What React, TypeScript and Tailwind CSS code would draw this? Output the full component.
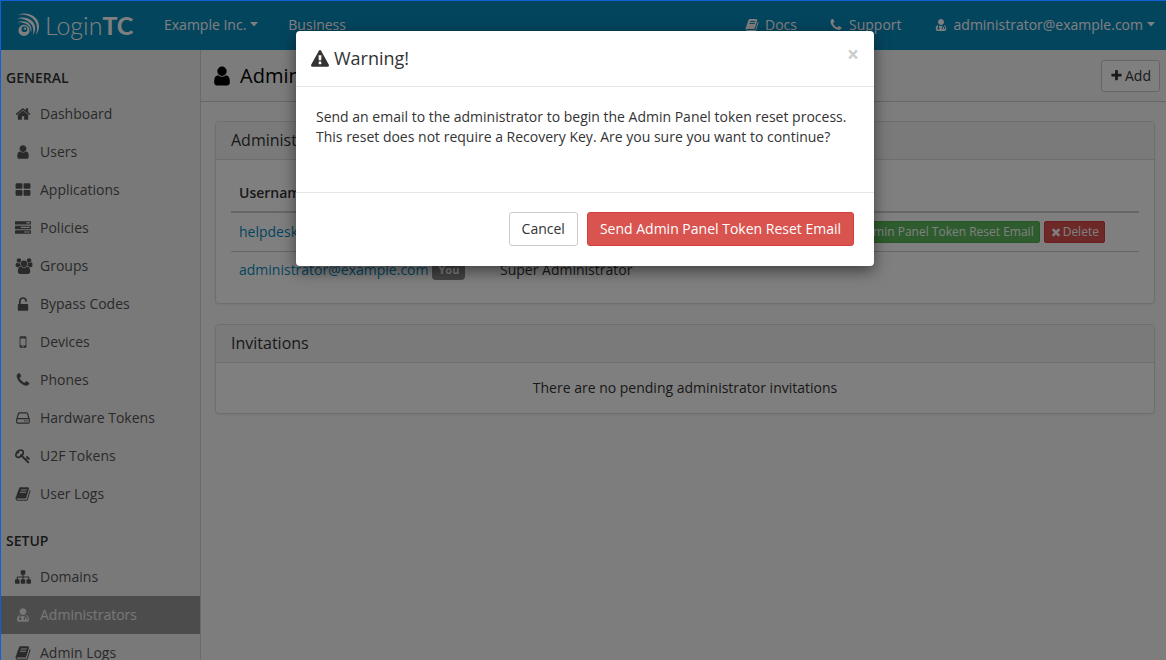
import type { ReactNode } from 'react';

const ICONS = {
  home: 'M1472 992v480q0 26-19 45t-45 19h-384v-384h-256v384h-384q-26 0-45-19t-19-45v-480q0-1 .5-3t.5-3l575-474 575 474q1 2 1 6zm223-69l-62 74q-8 9-21 11h-3q-13 0-21-7l-692-577-692 577q-12 8-24 7-13-2-21-11l-62-74q-8-10-7-23.5t11-21.5l719-599q32-26 76-26t76 26l244 204v-195q0-14 9-23t23-9h192q14 0 23 9t9 23v408l219 182q10 8 11 21.5t-7 23.5z',
  user: 'M1536 1399q0 109-62.5 187t-150.5 78h-854q-88 0-150.5-78t-62.5-187q0-85 8.5-160.5t31.5-152 58.5-131 94-89 134.5-34.5q131 128 313 128t313-128q76 0 134.5 34.5t94 89 58.5 131 31.5 152 8.5 160.5zm-256-887q0 159-112.5 271.5t-271.5 112.5-271.5-112.5-112.5-271.5 112.5-271.5 271.5-112.5 271.5 112.5 112.5 271.5z',
  thLarge: 'M832 1024v384q0 52-38 90t-90 38h-512q-52 0-90-38t-38-90v-384q0-52 38-90t90-38h512q52 0 90 38t38 90zm0-768v384q0 52-38 90t-90 38h-512q-52 0-90-38t-38-90v-384q0-52 38-90t90-38h512q52 0 90 38t38 90zm896 768v384q0 52-38 90t-90 38h-512q-52 0-90-38t-38-90v-384q0-52 38-90t90-38h512q52 0 90 38t38 90zm0-768v384q0 52-38 90t-90 38h-512q-52 0-90-38t-38-90v-384q0-52 38-90t90-38h512q52 0 90 38t38 90z',
  tasks: 'M1024 1408h640v-128h-640v128zm-384-512h1024v-128h-1024v128zm640-512h384v-128h-384v128zm512 832v256q0 26-19 45t-45 19h-1664q-26 0-45-19t-19-45v-256q0-26 19-45t45-19h1664q26 0 45 19t19 45zm0-512v256q0 26-19 45t-45 19h-1664q-26 0-45-19t-19-45v-256q0-26 19-45t45-19h1664q26 0 45 19t19 45zm0-512v256q0 26-19 45t-45 19h-1664q-26 0-45-19t-19-45v-256q0-26 19-45t45-19h1664q26 0 45 19t19 45z',
  users: 'M657 896q-162 5-265 128h-134q-82 0-138-40.5t-56-118.5q0-353 124-353 6 0 43.5 21t97.5 42.5 119 21.5q67 0 133-23-5 37-5 66 0 159 93 293zm1071 637q0 120-73 189.5t-194 69.5h-874q-121 0-194-69.5t-73-189.5q0-53 3.5-103.5t14-109 26.5-108.5 43-97.5 62-81 85.5-53.5 111.5-20q10 0 43 21.5t73 48 107 48 135 21.5 135-21.5 107-48 73-48 43-21.5q61 0 111.5 20t85.5 53.5 62 81 43 97.5 26.5 108.5 14 109 3.5 103.5zm-1024-1277q0 106-75 181t-181 75-181-75-75-181 75-181 181-75 181 75 75 181zm704 384q0 159-112.5 271.5t-271.5 112.5-271.5-112.5-112.5-271.5 112.5-271.5 271.5-112.5 271.5 112.5 112.5 271.5zm576 225q0 78-56 118.5t-138 40.5h-134q-103-123-265-128 93-134 93-293 0-29-5-66 66 23 133 23 59 0 119-21.5t97.5-42.5 43.5-21q124 0 124 353zm-128-609q0 106-75 181t-181 75-181-75-75-181 75-181 181-75 181 75 75 181z',
  unlock: 'M1376 896q40 0 68 28t28 68v576q0 40-28 68t-68 28h-960q-40 0-68-28t-28-68v-576q0-40 28-68t68-28h32v-320q0-185 131.5-316.5t316.5-131.5 316.5 131.5 131.5 316.5q0 26-19 45t-45 19h-64q-26 0-45-19t-19-45q0-106-75-181t-181-75-181 75-75 181v320h736z',
  mobile: 'M976 1408q0-33-23.5-56.5t-56.5-23.5-56.5 23.5-23.5 56.5 23.5 56.5 56.5 23.5 56.5-23.5 23.5-56.5zm208-160v-704q0-13-9.5-22.5t-22.5-9.5h-512q-13 0-22.5 9.5t-9.5 22.5v704q0 13 9.5 22.5t22.5 9.5h512q13 0 22.5-9.5t9.5-22.5zm-192-848q0-16-16-16h-160q-16 0-16 16t16 16h160q16 0 16-16zm288-16v1024q0 52-38 90t-90 38h-512q-52 0-90-38t-38-90v-1024q0-52 38-90t90-38h512q52 0 90 38t38 90z',
  phone: 'M1600 1240q0 27-10 70.5t-21 68.5q-21 50-122 106-94 51-186 51-27 0-53-3.5t-57.5-12.5-47-14.5-55.5-20.5-49-18q-98-35-175-83-127-79-264-216t-216-264q-48-77-83-175-3-9-18-49t-20.5-55.5-14.5-47-12.5-57.5-3.5-53q0-92 51-186 56-101 106-122 25-11 68.5-21t70.5-10q14 0 21 3 18 6 53 76 11 19 30 54t35 63.5 31 53.5q3 4 17.5 25t21.5 35.5 7 28.5q0 20-28.5 50t-62 55-62 53-28.5 46q0 9 5 22.5t8.5 20.5 14 24 11.5 19q76 137 174 235t235 174q2 1 19 11.5t24 14 20.5 8.5 22.5 5q18 0 46-28.5t53-62 55-62 50-28.5q14 0 28.5 7t35.5 21.5 25 17.5q25 15 53.5 31t63.5 35 54 30q70 35 76 53 3 7 3 21z',
  hdd: 'M1168 1216q0 33-23.5 56.5t-56.5 23.5-56.5-23.5-23.5-56.5 23.5-56.5 56.5-23.5 56.5 23.5 23.5 56.5zm256 0q0 33-23.5 56.5t-56.5 23.5-56.5-23.5-23.5-56.5 23.5-56.5 56.5-23.5 56.5 23.5 23.5 56.5zm112 160v-320q0-13-9.5-22.5t-22.5-9.5h-1216q-13 0-22.5 9.5t-9.5 22.5v320q0 13 9.5 22.5t22.5 9.5h1216q13 0 22.5-9.5t9.5-22.5zm-1230-480h1180l-157-482q-4-13-16-21.5t-26-8.5h-782q-14 0-26 8.5t-16 21.5zm1358 160v320q0 66-47 113t-113 47h-1216q-66 0-113-47t-47-113v-320q0-25 16-75l197-606q17-53 63-86t101-33h782q55 0 101 33t63 86l197 606q16 50 16 75z',
  key: 'M832 512q0-80-56-136t-136-56-136 56-56 136q0 42 19 83-41-19-83-19-80 0-136 56t-56 136 56 136 136 56 136-56 56-136q0-42-19-83 41 19 83 19 80 0 136-56t56-136zm851 704q0 17-49 66t-66 49q-9 0-28.5-16t-36.5-33-38.5-40-24.5-26l-96 96 220 220q28 28 28 68 0 42-39 81t-81 39q-40 0-68-28l-671-671q-176 131-365 131-163 0-265.5-102.5t-102.5-265.5q0-160 95-313t248-248 313-95q163 0 265.5 102.5t102.5 265.5q0 189-131 365l355 355 96-96q-3-3-26-24.5t-40-38.5-33-36.5-16-28.5q0-17 49-66t66-49q13 0 23 10 6 6 46 44.5t82 79.5 86.5 86 73 78 28.5 41z',
  book: 'M1703 478q40 57 18 129l-275 906q-19 64-76.5 107.5t-122.5 43.5h-923q-77 0-148.5-53.5t-99.5-131.5q-24-67-2-127 0-4 3-27t4-37q1-8-3-21.5t-3-19.5q2-11 8-21t16.5-23.5 16.5-23.5q23-38 45-91.5t30-91.5q3-10 .5-30t-.5-28q3-11 17-28t17-23q21-36 42-92t25-90q1-9-2.5-32t.5-28q4-13 22-30.5t22-22.5q19-26 42.5-84.5t27.5-96.5q1-8-3-25.5t-2-26.5q2-8 9-18t18-23 17-21q8-12 16.5-30.5t15-35 16-36 19.5-32 26.5-23.5 36-11.5 47.5 5.5l-1 3q38-9 51-9h761q74 0 114 56t18 130l-274 906q-36 119-71.5 153.5t-128.5 34.5h-869q-27 0-38 15-11 16-1 43 24 70 144 70h923q29 0 56-15.5t35-41.5l300-987q7-22 5-57 38 15 59 43zm-1064 2q-4 13 2 22.5t20 9.5h608q13 0 25.5-9.5t16.5-22.5l21-64q4-13-2-22.5t-20-9.5h-608q-13 0-25.5 9.5t-16.5 22.5zm-83 256q-4 13 2 22.5t20 9.5h608q13 0 25.5-9.5t16.5-22.5l21-64q4-13-2-22.5t-20-9.5h-608q-13 0-25.5 9.5t-16.5 22.5z',
  sitemap: 'M1792 1248v320q0 40-28 68t-68 28h-320q-40 0-68-28t-28-68v-320q0-40 28-68t68-28h96v-192h-512v192h96q40 0 68 28t28 68v320q0 40-28 68t-68 28h-320q-40 0-68-28t-28-68v-320q0-40 28-68t68-28h96v-192h-512v192h96q40 0 68 28t28 68v320q0 40-28 68t-68 28h-320q-40 0-68-28t-28-68v-320q0-40 28-68t68-28h96v-192q0-52 38-90t90-38h512v-192h-96q-40 0-68-28t-28-68v-320q0-40 28-68t68-28h320q40 0 68 28t28 68v320q0 40-28 68t-68 28h-96v192h512q52 0 90 38t38 90v192h96q40 0 68 28t28 68z',
  userMd: 'M1280 512q0 159-112.5 271.5t-271.5 112.5-271.5-112.5-112.5-271.5 112.5-271.5 271.5-112.5 271.5 112.5 112.5 271.5zM512 900q-130 30-210 150t-76 390q0 100 70 162t180 62h840q110 0 180-62t70-162q4-270-76-390t-210-150v130q150 40 150 200v200h-128v-190q0-90-90-90t-90 90v190h-128v-190q0-160 160-200v-90q-110 74-258 74t-258-74v270q80 40 80 130 0 140-144 140t-144-140q0-90 80-130z',
  warning: 'M1024 1375v-190q0-14-9.5-23.5t-22.5-9.5h-192q-13 0-22.5 9.5t-9.5 23.5v190q0 14 9.5 23.5t22.5 9.5h192q13 0 22.5-9.5t9.5-23.5zm-2-374l18-459q0-12-10-19-13-11-24-11h-220q-11 0-24 11-10 7-10 21l17 457q0 10 10 16.5t24 6.5h185q14 0 23.5-6.5t10.5-16.5zm-14-934l768 1408q35 63-2 126-17 29-46.5 46t-63.5 17h-1536q-34 0-63.5-17t-46.5-46q-37-63-2-126l768-1408q17-31 47-49t65-18 65 18 47 49z',
  plus: 'M1600 736v192q0 40-28 68t-68 28h-416v416q0 40-28 68t-68 28h-192q-40 0-68-28t-28-68v-416h-416q-40 0-68-28t-28-68v-192q0-40 28-68t68-28h416v-416q0-40 28-68t68-28h192q40 0 68 28t28 68v416h416q40 0 68 28t28 68z',
  times: 'M1490 1322q0 40-28 68l-136 136q-28 28-68 28t-68-28l-294-294-294 294q-28 28-68 28t-68-28l-136-136q-28-28-28-68t28-68l294-294-294-294q-28-28-28-68t28-68l136-136q28-28 68-28t68 28l294 294 294-294q28-28 68-28t68 28l136 136q28 28 28 68t-28 68l-294 294 294 294q28 28 28 68z',
};

type IconName = keyof typeof ICONS;

const GENERAL: { label: string; icon: IconName }[] = [
  { label: 'Dashboard', icon: 'home' },
  { label: 'Users', icon: 'user' },
  { label: 'Applications', icon: 'thLarge' },
  { label: 'Policies', icon: 'tasks' },
  { label: 'Groups', icon: 'users' },
  { label: 'Bypass Codes', icon: 'unlock' },
  { label: 'Devices', icon: 'mobile' },
  { label: 'Phones', icon: 'phone' },
  { label: 'Hardware Tokens', icon: 'hdd' },
  { label: 'U2F Tokens', icon: 'key' },
  { label: 'User Logs', icon: 'book' },
];

const SETUP: { label: string; icon: IconName; active?: boolean }[] = [
  { label: 'Domains', icon: 'sitemap' },
  { label: 'Administrators', icon: 'userMd', active: true },
  { label: 'Admin Logs', icon: 'book' },
];

function Icon({ name, className }: { name: IconName; className: string }) {
  return (
    <svg
      viewBox={name === 'users' ? '0 0 2048 1792' : '0 0 1792 1792'}
      className={`shrink-0 fill-current ${className}`}
      aria-hidden="true"
    >
      <path d={ICONS[name]} />
    </svg>
  );
}

function Caret() {
  return (
    <svg viewBox="0 0 8 5" className="h-[5px] w-2 fill-current" aria-hidden="true">
      <path d="M0 0h8L4 4.5z" />
    </svg>
  );
}

function Logo() {
  return (
    <a href="#" className="flex w-[119px] shrink-0 items-center gap-1 text-white" aria-label="LoginTC">
      <svg viewBox="0 0 24 24" className="size-6 shrink-0 fill-current" aria-hidden="true">
        <path
          fillRule="evenodd"
          d="M8 11.800a5.600 5.600 0 1 1 0 11.200 5.600 5.600 0 1 1 0-11.200zm.4 1.500a2.900 2.900 0 1 0 0 5.800 2.900 2.900 0 1 0 0-5.800z"
        />
        <circle cx="9" cy="15.600" r="1.200" />
        <path d="M1.500 2C11-2.500 23.500 3 23 14c-.2 3-1.300 5.700-3 7.800 1.800-6.300 1.600-12.300-3.600-16.600C11.500 1.500 6.500.8 1.500 2z" />
        <path d="M.5 5.800C8.500 2 19.500 6.500 19.200 15.500c-.1 2.500-.9 4.800-2.200 6.500 1-5.300.3-9.900-4.200-13C9.300 6.400 4.500 5 .5 5.800z" />
        <path d="M.8 9.500C7.500 6 16 9.500 15.500 17c0 .9-.2 1.800-.5 2.600-.2-4-1.400-6.800-4.800-8.600C7.200 9.300 3.800 8.900.8 9.500z" />
      </svg>
      <span className="flex pl-px font-['Lato',sans-serif] text-[25px] leading-8 font-light">
        Login<b className="font-bold">TC</b>
      </span>
    </a>
  );
}

function NavLink({ icon, children }: { icon?: IconName; children: ReactNode }) {
  return (
    <a href="#" className="flex items-center gap-1 text-white">
      {icon && <Icon name={icon} className="mr-0.5 size-3.5" />}
      {children}
    </a>
  );
}

function SideSection({ title, items }: { title: string; items: { label: string; icon: IconName; active?: boolean }[] }) {
  return (
    <section>
      <h2 className="px-[5px] pt-[18px] pb-[7px] font-semibold text-[#333]">{title}</h2>
      <ul>
        {items.map((item) => (
          <li key={item.label}>
            <a
              href="#"
              className={`flex h-[38px] items-center pl-3.5 ${item.active ? 'bg-[#999] text-[#eee]' : 'text-[#555]'}`}
            >
              <span className="w-[25px]">
                <Icon name={item.icon} className={item.icon === 'users' ? 'h-4 w-[18px]' : 'size-4'} />
              </span>
              {item.label}
            </a>
          </li>
        ))}
      </ul>
    </section>
  );
}

function Panel({ title, children }: { title: string; children: ReactNode }) {
  return (
    <section className="rounded border border-[#ddd] bg-white shadow-xs">
      <h3 className="rounded-t border-b border-[#ddd] bg-[#f5f5f5] px-[15px] py-2 text-base leading-[21px] text-[#333]">
        {title}
      </h3>
      <div className="p-[15px]">{children}</div>
    </section>
  );
}

function WarningDialog() {
  return (
    <div className="absolute inset-0 flex items-start justify-center bg-black/50 pt-[30px] pl-[3px]">
      <div
        role="dialog"
        aria-modal="true"
        aria-labelledby="warning-title"
        className="w-[578px] rounded bg-white shadow-[0_5px_15px_rgba(0,0,0,0.5)]"
      >
        <div className="flex items-start justify-between border-b border-[#e5e5e5] p-[15px]">
          <h4 id="warning-title" className="flex items-center gap-[5px] text-lg leading-[25px]">
            <Icon name="warning" className="size-[18px]" />
            Warning!
          </h4>
          <button aria-label="Close" className="text-[21px] leading-4 font-bold text-[#ccc]">
            ×
          </button>
        </div>
        <p className="px-5 pt-5 pb-[45px]">
          Send an email to the administrator to begin the Admin Panel token reset process. This reset does not require a
          Recovery Key. Are you sure you want to continue?
        </p>
        <div className="flex justify-end gap-[9px] border-t border-[#e5e5e5] px-5 pt-[19px] pb-5">
          <button className="rounded-[3px] border border-[#ccc] bg-white px-3 py-1.5">Cancel</button>
          <button className="rounded-[3px] border border-[#d43f3a] bg-[#d9534f] px-3 py-1.5 text-white">
            Send Admin Panel Token Reset Email
          </button>
        </div>
      </div>
    </div>
  );
}

export default function App() {
  return (
    <div className="relative flex h-screen flex-col overflow-hidden border-t border-l border-[#1160d8] bg-[#fafafa] font-['Open_Sans',sans-serif] text-sm leading-5 text-[#333]">
      {/* Top bar */}
      <header className="flex h-[49px] shrink-0 items-center bg-[#088abd] pr-[11px] pb-0.5 pl-[15px]">
        <Logo />
        <nav className="ml-[29px] flex flex-1 items-center gap-[30px]">
          <NavLink>
            Example Inc. <Caret />
          </NavLink>
          <NavLink>Business</NavLink>
        </nav>
        <nav className="flex items-center gap-8">
          <NavLink icon="book">Docs</NavLink>
          <NavLink icon="phone">Support</NavLink>
          <NavLink icon="userMd">
            administrator@example.com <Caret />
          </NavLink>
        </nav>
      </header>

      <div className="flex flex-1">
        {/* Sidebar */}
        <aside className="w-[200px] shrink-0 border-r border-[#d5d5d5] bg-[#f2f2f2]">
          <SideSection title="GENERAL" items={GENERAL} />
          <SideSection title="SETUP" items={SETUP} />
        </aside>

        {/* Content */}
        <main className="min-w-0 flex-1">
          <div className="flex h-[52px] items-center justify-between border-b border-[#ccc] bg-[#f8f8f8] pr-1.5 pl-2.5">
            <h1 className="flex items-center gap-[7px] text-xl text-black">
              <Icon name="user" className="size-[22px]" />
              Administrators
            </h1>
            <button className="flex items-center gap-0.5 rounded-[3px] border border-[#ccc] bg-white px-2 py-[5px]">
              <Icon name="plus" className="size-[13px]" />
              Add
            </button>
          </div>

          <div className="flex flex-col gap-5 py-[19px] pr-[11px] pl-3.5">
            <Panel title="Administrators">
              <table className="w-full table-fixed text-left">
                <thead>
                  <tr className="border-b-2 border-[#ccc]">
                    <th className="w-[261px] p-2 font-semibold">Username</th>
                    <th className="w-[321px] p-2 font-semibold">Role</th>
                    <th className="p-2 font-semibold">Actions</th>
                  </tr>
                </thead>
                <tbody>
                  <tr className="border-b border-[#ccc]">
                    <td className="p-2">
                      <a href="#" className="text-[#088abd]">helpdesk@example.com</a>
                    </td>
                    <td className="p-2">Administrator</td>
                    <td className="p-2">
                      <div className="flex gap-1 text-xs leading-[18px] whitespace-nowrap text-white">
                        <button className="rounded-xs border border-[#4cae4c] bg-[#5cb85c] px-[5px] py-px">
                          Send Admin Panel Token Reset Email
                        </button>
                        <button className="flex items-center gap-px rounded-xs border border-[#d43f3a] bg-[#d9534f] px-[5px] py-px">
                          <Icon name="times" className="size-3" />
                          Delete
                        </button>
                      </div>
                    </td>
                  </tr>
                  <tr>
                    <td className="p-2 whitespace-nowrap">
                      <div className="flex items-center gap-1">
                        <a href="#" className="text-[#088abd]">administrator@example.com</a>
                        <span className="rounded-sm bg-[#888] px-1.5 text-[11px] leading-5 font-bold text-white">You</span>
                      </div>
                    </td>
                    <td className="p-2">Super Administrator</td>
                    <td />
                  </tr>
                </tbody>
              </table>
            </Panel>

            <Panel title="Invitations">
              <p className="text-center">There are no pending administrator invitations</p>
            </Panel>
          </div>
        </main>
      </div>

      <WarningDialog />
    </div>
  );
}
